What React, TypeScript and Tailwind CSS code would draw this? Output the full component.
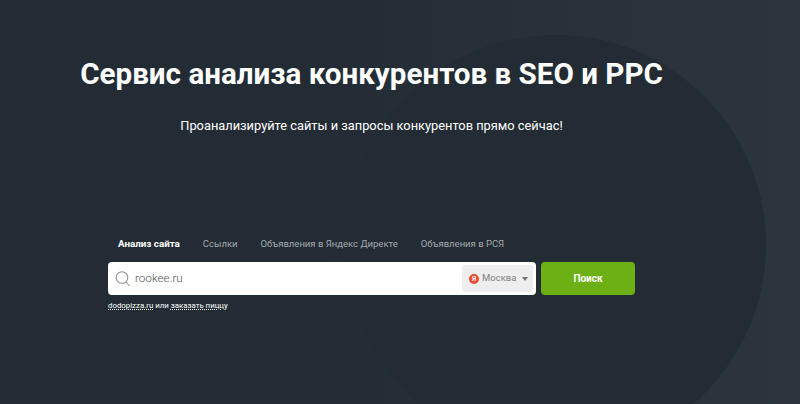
import React from "react";

export default function App() {
  return (
    <div className="relative w-[800px] h-[404px] overflow-hidden bg-linear-to-r from-[#232c34] from-[40%] via-[#28313a] via-[67%] to-[#2c353c] font-['Roboto',sans-serif]">
      <div className="absolute left-[346px] top-[35px] w-[420px] h-[420px] rounded-full bg-[#232c34]" />
      <div className="relative w-[743px] flex flex-col items-center pt-[56px]">
        <h1 className="text-[29.6px] leading-[36px] font-bold text-white whitespace-nowrap">
          Сервис анализа конкурентов в SEO и PPC
        </h1>
        <p className="mt-[24px] text-[12.83px] leading-[20px] text-white whitespace-nowrap">
          Проанализируйте сайты и запросы конкурентов прямо сейчас!
        </p>
        <div className="mt-[90px] w-[527px]">
          <div className="flex items-center h-[36px] pl-[10px] gap-[23px] text-[9.5px] text-[#a3a9ad] whitespace-nowrap">
            <span className="font-bold text-[9.8px] text-white">Анализ сайта</span>
            <span>Ссылки</span>
            <span>Объявления в Яндекс Директе</span>
            <span>Объявления в РСЯ</span>
          </div>
          <div className="flex gap-[5px]">
            <div className="w-[428px] h-[33px] rounded-[4px] bg-white flex items-center pl-[7px] pr-[3px]">
              <svg width="16" height="17" viewBox="0 0 16 17" fill="none" stroke="#8f9396" strokeWidth="1.1" className="shrink-0">
                <circle cx="7" cy="7.5" r="5.8" />
                <path d="M11 12l3.5 4" />
              </svg>
              <span className="ml-[4px] flex-1 text-[11.7px] font-light text-[#4f5356]">rookee.ru</span>
              <div className="w-[71px] h-[27px] rounded-[3px] bg-[#eeeeee] flex items-center pl-[7px]">
                <span className="w-[10px] h-[10px] rounded-full bg-[#f0482a] text-white text-[7px] font-bold leading-[10px] text-center">Я</span>
                <span className="ml-[3px] text-[9.5px] text-[#7d8184]">Москва</span>
                <span className="ml-[6px] w-0 h-0 border-x-[3.5px] border-x-transparent border-t-[4px] border-t-[#6f7376]" />
              </div>
            </div>
            <button className="w-[94px] h-[33px] rounded-[4px] bg-[#6cb015] text-white text-[10px] font-bold">Поиск</button>
          </div>
          <div className="mt-[6px] text-[7.85px] leading-[10px] text-white whitespace-nowrap">
            <span className="underline decoration-dotted">dodopizza.ru</span> или <span className="underline decoration-dotted">заказать пиццу</span>
          </div>
        </div>
      </div>
    </div>
  );
}
